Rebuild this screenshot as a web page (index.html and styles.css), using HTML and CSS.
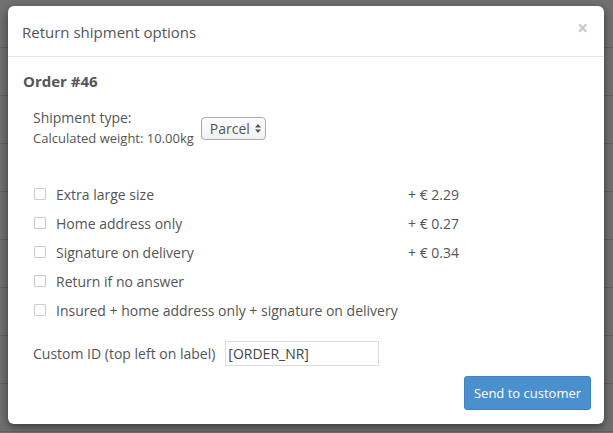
FILE: index.html
```html
<!DOCTYPE html>
<html>
<head>
<meta charset="utf-8">
<link rel="stylesheet" href="styles.css">
</head>
<body>
<div class="page">
  <div class="row"></div><div class="row"></div><div class="row"></div><div class="row"></div><div class="row"></div><div class="row"></div><div class="row"></div><div class="row"></div><div class="row"></div>
</div>
<div class="backdrop"></div>
<div class="modal">
  <div class="modal-header">
    <h4 class="modal-title">Return shipment options</h4>
    <span class="close">×</span>
  </div>
  <div class="modal-body">
    <h5 class="order">Order #46</h5>
    <div class="shipment">
      <div class="ship-label">
        <div class="ship-type">Shipment type:</div>
        <div class="ship-weight">Calculated weight: 10.00kg</div>
      </div>
      <div class="select">Parcel <span class="arrows"><svg width="6" height="9" viewBox="0 0 6 9"><path d="M3 0 L6 3.5 L0 3.5 Z M3 9 L6 5.5 L0 5.5 Z" fill="#555"/></svg></span></div>
    </div>
    <div class="options">
      <div class="opt"><span class="cb"></span><span class="opt-label">Extra large size</span><span class="price">+ € 2.29</span></div>
      <div class="opt"><span class="cb"></span><span class="opt-label">Home address only</span><span class="price">+ € 0.27</span></div>
      <div class="opt"><span class="cb"></span><span class="opt-label">Signature on delivery</span><span class="price">+ € 0.34</span></div>
      <div class="opt"><span class="cb"></span><span class="opt-label">Return if no answer</span><span class="price"></span></div>
      <div class="opt"><span class="cb"></span><span class="opt-label">Insured + home address only + signature on delivery</span><span class="price"></span></div>
    </div>
    <div class="custom">
      <span class="custom-label">Custom ID (top left on label)</span>
      <span class="input">[ORDER_NR]</span>
    </div>
    <div class="footer">
      <span class="btn">Send to customer</span>
    </div>
  </div>
</div>
</body>
</html>
```
FILE: styles.css
```css
html, body {
  margin: 0;
  padding: 0;
  width: 613px;
  height: 433px;
  overflow: hidden;
  background: #fff;
  font-family: "Open Sans", "DejaVu Sans", sans-serif;
}
.page {
  display: flex;
  flex-direction: column;
  height: 433px;
  overflow: hidden;
}
.page .row {
  height: 47px;
  flex: none;
  border-bottom: 1px solid #ddd;
}
.backdrop {
  position: absolute;
  inset: 0;
  background: rgba(0, 0, 0, 0.56);
}
.modal {
  position: absolute;
  left: 8px;
  top: 6px;
  width: 596px;
  height: 418px;
  background: #fff;
  border-radius: 6px;
  box-shadow: 0 3px 9px rgba(0, 0, 0, 0.5);
  color: #555;
  display: flex;
  flex-direction: column;
}
.modal-header {
  height: 50px;
  border-bottom: 1px solid #e5e5e5;
  display: flex;
  align-items: center;
  justify-content: space-between;
  padding: 0 16px 0 14px;
}
.modal-title {
  margin: 0;
  font-size: 15px;
  font-weight: 400;
  color: #555;
  padding-top: 2px;
}
.close {
  font-size: 19px;
  font-weight: 700;
  color: #c8c8c8;
  margin-top: -6px;
}
.modal-body {
  padding: 14px 13px 0 15px;
  display: flex;
  flex-direction: column;
}
.order {
  margin: 0;
  font-size: 15px;
  font-weight: 700;
  color: #555;
}
.shipment {
  display: flex;
  align-items: center;
  margin: 18px 0 0 10px;
}
.ship-type {
  font-size: 14px;
  line-height: 18px;
}
.ship-weight {
  font-size: 13px;
  line-height: 22px;
}
.select {
  margin-left: 7px;
  margin-top: -2px;
  height: 23px;
  box-sizing: border-box;
  border: 1px solid #aaa;
  border-radius: 4px;
  padding: 0 4px 0 8px;
  font-size: 14px;
  display: flex;
  align-items: center;
  gap: 5px;
  background: linear-gradient(#fdfdfd, #f2f2f2);
}
.arrows {
  display: flex;
}
.options {
  margin-top: 35px;
  display: flex;
  flex-direction: column;
  gap: 9px;
}
.opt {
  display: flex;
  align-items: center;
  height: 20px;
  font-size: 14px;
}
.cb {
  width: 12px;
  height: 12px;
  box-sizing: border-box;
  border: 1px solid #ccc;
  border-radius: 1px;
  margin-left: 11px;
  margin-right: 10px;
}
.opt-label {
  width: 352px;
}
.custom {
  display: flex;
  align-items: center;
  margin: 21px 0 0 10px;
  font-size: 14px;
}
.input {
  margin-left: 10px;
  width: 154px;
  height: 25px;
  box-sizing: border-box;
  border: 1px solid #ddd;
  padding: 0 2px;
  display: flex;
  align-items: center;
  color: #444;
}
.footer {
  display: flex;
  justify-content: flex-end;
  margin-top: 10px;
}
.btn {
  background: #4a90cf;
  border: 1px solid #3f82bf;
  border-radius: 3px;
  color: #fff;
  font-size: 13px;
  width: 127px;
  height: 34px;
  box-sizing: border-box;
  display: flex;
  align-items: center;
  justify-content: center;
}
```
